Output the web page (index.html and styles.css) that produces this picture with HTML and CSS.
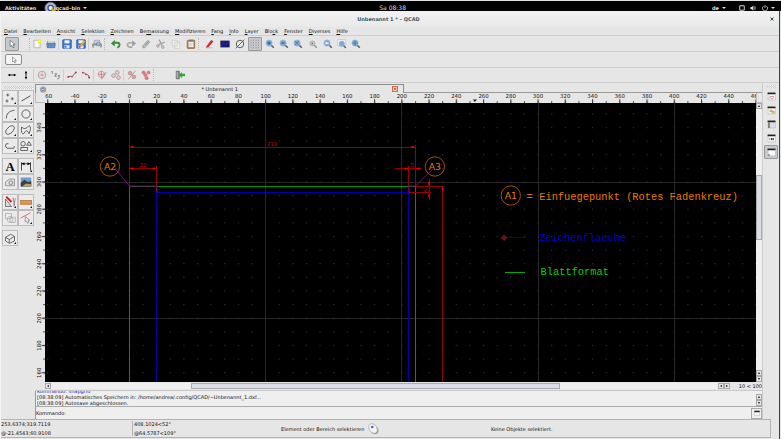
FILE: index.html
```html
<!DOCTYPE html>
<html lang="de">
<head>
<meta charset="utf-8">
<title>Unbenannt 1 * – QCAD</title>
<link rel="stylesheet" href="styles.css">
</head>
<body>
<svg class="defs" aria-hidden="true">
  <defs>
    <symbol id="cursor" viewBox="0 0 16 16"><path d="M5 2v10l2.500-2 2 4 2-1-2-4h3.500z" fill="#fff" stroke="#555"/></symbol>
    <symbol id="new" viewBox="0 0 16 16"><path d="M3 2h10v12H3z" fill="#f6f6f6" stroke="#999"/><circle cx="12" cy="4" r="3.500" fill="#f2e83a"/><circle cx="12" cy="4" r="1.500" fill="#fffbb0"/></symbol>
    <symbol id="open" viewBox="0 0 16 16"><path d="M2 3h5l1 1h6v9H2z" fill="#888"/><path d="M3 3h10v4H3z" fill="#d5d5d5"/><path d="M1 7h14l-1 7H2z" fill="#5d8fc7" stroke="#406fa5"/></symbol>
    <symbol id="save" viewBox="0 0 16 16"><rect x="1" y="1" width="14" height="14" rx="1" fill="#3b74d4" stroke="#2857a8"/><path d="M4 2h8v5H4z" fill="#f3f3f3"/><path d="M4 10h8v5H4z" fill="#dfe7f5"/><path d="M5 11h2v3H5z" fill="#2857a8"/></symbol>
    <symbol id="saveas" viewBox="0 0 16 16"><use href="#save"/><path d="M6 12l1-3 6-7 2 2-6 7z" fill="#f3b743" stroke="#a96b18" stroke-width=".7"/></symbol>
    <symbol id="print" viewBox="0 0 16 16"><path d="M4 2h8l1 6H3z" fill="#c9dcee" stroke="#888"/><path d="M1 8h14v5H1z" fill="#a9a9a9" stroke="#777"/><path d="M3 11h10v3H3z" fill="#ececec"/><circle cx="10" cy="8" r="3" fill="#9ec2e4" stroke="#668"/></symbol>
    <symbol id="undo" viewBox="0 0 16 16"><path d="M5 6h5c5 0 5 6 0 8" fill="none" stroke="#388c3a" stroke-width="3"/><path d="M0 7l6-6v11z" fill="#388c3a"/></symbol>
    <symbol id="redo" viewBox="0 0 16 16"><path d="M11 6H6c-5 0-5 6 0 7h4" fill="none" stroke="#aaa" stroke-width="2.500"/><path d="M16 7l-6-5v10z" fill="#999"/></symbol>
    <symbol id="eraser" viewBox="0 0 16 16"><path d="M3 11L11 2l3 3-8 9H3z" fill="#ccc" stroke="#777"/><path d="M6 11l6-7" stroke="#666"/></symbol>
    <symbol id="cut" viewBox="0 0 16 16"><path d="M5 1l5 10M14 5L4 9" stroke="#a4a4a4" stroke-width="2"/><circle cx="3" cy="11" r="2" fill="none" stroke="#999" stroke-width="1.500"/><circle cx="11" cy="13" r="2" fill="none" stroke="#999" stroke-width="1.500"/></symbol>
    <symbol id="copy" viewBox="0 0 16 16"><path d="M2 2h8v9H2zM6 5h8v10H6z" fill="#f0f0f0" stroke="#c2c2c2"/></symbol>
    <symbol id="paste" viewBox="0 0 16 16"><rect x="2" y="2" width="12" height="13" rx="1" fill="#b5813f" stroke="#80551d"/><path d="M4 4h8v9H4z" fill="#f4f4f4"/><path d="M5 1h6v3H5z" fill="#777"/><path d="M5 7h6M5 9h6M5 11h4" stroke="#aaa" stroke-width=".7"/></symbol>
    <symbol id="pen" viewBox="0 0 16 16"><path d="M3 11l7-9 3 2-8 9-3 1z" fill="#d92a28" stroke="#8e1313" stroke-width=".6"/><path d="M2 14h10" stroke="#e79b9b" stroke-width="1.500"/></symbol>
    <symbol id="draft" viewBox="0 0 16 16"><path d="M1 3h14v10H1z" fill="#0b1681" stroke="#444"/><path d="M2 11l5-4 2 2 5-4M3 6h3" stroke="#3a46a8" fill="none"/></symbol>
    <symbol id="noline" viewBox="0 0 16 16"><circle cx="8" cy="8" r="6" fill="none" stroke="#444" stroke-width="1.300"/><path d="M1 15L15 1" stroke="#4a4ab8" stroke-width="1.300"/></symbol>
    <symbol id="grid" viewBox="0 0 16 16"><path d="M1 2h14M1 6h14M1 10h14M1 14h14" stroke="#6b6b6b" stroke-width="1.300" stroke-dasharray="1.300 2.700"/></symbol>
    <symbol id="lens" viewBox="0 0 16 16"><path d="M9 9l5 5" stroke="#626262" stroke-width="2.500"/><circle cx="6.500" cy="6.500" r="5" fill="#78a9dc" stroke="#a4b6c9"/></symbol>
    <symbol id="zin" viewBox="0 0 16 16"><use href="#lens"/><path d="M4 6.500h5M6.500 4v5" stroke="#1d4f90" stroke-width="1.500"/></symbol>
    <symbol id="zout" viewBox="0 0 16 16"><use href="#lens"/><path d="M4 6.500h5" stroke="#1d4f90" stroke-width="1.500"/></symbol>
    <symbol id="zauto" viewBox="0 0 16 16"><use href="#lens"/><path d="M3 3l7 7M10 3l-7 7" stroke="#45719f"/></symbol>
    <symbol id="zsel" viewBox="0 0 16 16"><path d="M9 9l5 5" stroke="#888" stroke-width="2"/><circle cx="7" cy="7" r="4" fill="#cfcfcf" stroke="#999"/><path d="M5 7h4M7 5v4" stroke="#777"/></symbol>
    <symbol id="zprev" viewBox="0 0 16 16"><use href="#lens"/><path d="M3 6.500l3-2v1h3v2H6v1z" fill="#fff"/></symbol>
    <symbol id="zwin" viewBox="0 0 16 16"><path d="M1 1h13v10H1z" fill="#f4f4f4" stroke="#bbb"/><g transform="translate(2 2)"><use href="#lens" width="14" height="14"/></g></symbol>
    <symbol id="zpan" viewBox="0 0 16 16"><use href="#lens"/><path d="M6.500 2v9M2 6.500h9" stroke="#3b6ba3"/></symbol>

    <symbol id="horiz" viewBox="0 0 16 16"><path d="M3 8h10" stroke="#111" stroke-width="1.500"/><path d="M1 8l4-2v4zM15 8l-4-2v4z"/></symbol>
    <symbol id="vert" viewBox="0 0 16 16"><path d="M8 3v10" stroke="#111" stroke-width="1.500"/><path d="M8 1L6 5h4zM8 15l-2-4h4z"/></symbol>
    <symbol id="center" viewBox="0 0 16 16"><circle cx="8" cy="8" r="6" fill="none" stroke="#888"/><path d="M8 3v10M3 8h10" stroke="#e09999"/><circle cx="8" cy="8" r="2" fill="#e9a0a0"/></symbol>
    <symbol id="order" viewBox="0 0 16 16"><path d="M1 3l1-1v4M6 6h3l-3 4h3M11 9h3l-2 2q3 1 0 3h-2" fill="none" stroke="#444"/></symbol>
    <symbol id="pathup" viewBox="0 0 16 16"><path d="M2 11q3-2 6 0l5-6" fill="none" stroke="#444" stroke-width="1.200"/><circle cx="2" cy="11" r="1.500" fill="#c22"/><circle cx="14" cy="4" r="1.500" fill="#c22"/><path d="M7 11h3" stroke="#c22"/></symbol>
    <symbol id="pathdown" viewBox="0 0 16 16"><path d="M2 5q4-2 6 2 4-1 6 6" fill="none" stroke="#555" stroke-width="1.200"/><circle cx="3" cy="4" r="1.300" fill="#c22"/><circle cx="8" cy="7" r="1.300" fill="#c22"/><circle cx="13" cy="12" r="1.500" fill="#c22"/></symbol>
    <symbol id="tangent" viewBox="0 0 16 16"><circle cx="7" cy="7" r="5" fill="#f4dada" stroke="#999"/><path d="M7 1v12M1 7h12" stroke="#d55"/><path d="M7 15l8-12" stroke="#777"/></symbol>
    <symbol id="circles" viewBox="0 0 16 16"><g fill="#f0caca" stroke="#888"><circle cx="4" cy="9" r="3"/><circle cx="10" cy="4" r="3"/><circle cx="12" cy="12" r="3"/></g></symbol>
    <symbol id="slashred" viewBox="0 0 16 16"><g fill="#e99" stroke="#a88"><circle cx="5" cy="5" r="3"/><circle cx="11" cy="11" r="3"/></g><path d="M2 15L14 1" stroke="#777"/></symbol>
    <symbol id="redset" viewBox="0 0 16 16"><g fill="#e77" stroke="#b77"><circle cx="4" cy="4" r="2.500"/><circle cx="12" cy="4" r="2.500"/><circle cx="7" cy="8" r="2.500"/><circle cx="9" cy="13" r="2.500"/></g></symbol>
    <symbol id="exit" viewBox="0 0 16 16"><path d="M2 2h5v12H2z" fill="#ccc" stroke="#444"/><path d="M5 2v12" stroke="#333"/><path d="M6 8l5-5v3h5v4h-5v3z" fill="#31a831"/></symbol>

    <symbol id="point" viewBox="0 0 16 16"><path d="M5 2v4M3 4h4M4 10v4M2 12h4M11 7v4M9 9h4" stroke="#444"/></symbol>
    <symbol id="line" viewBox="0 0 16 16"><path d="M2 12l12-7" stroke="#444" stroke-width="1.200"/></symbol>
    <symbol id="arc" viewBox="0 0 16 16"><path d="M3 14Q3 4 14 3" fill="none" stroke="#555" stroke-width="1.200"/></symbol>
    <symbol id="circle" viewBox="0 0 16 16"><circle cx="8" cy="8" r="5.500" fill="none" stroke="#555" stroke-width="1.200"/></symbol>
    <symbol id="ellipse" viewBox="0 0 16 16"><ellipse cx="8" cy="8" rx="7" ry="4" transform="rotate(-45 8 8)" fill="none" stroke="#555" stroke-width="1.200"/></symbol>
    <symbol id="spline" viewBox="0 0 16 16"><path d="M2 4q5 5 10-2 4 2 0 11Q9 5 5 13 1 14 2 4z" fill="none" stroke="#555" stroke-width="1.200"/></symbol>
    <symbol id="poly" viewBox="0 0 16 16"><path d="M6 5H3q-3 3 1 6h9q2-2 0-3" fill="none" stroke="#555" stroke-width="1.200"/></symbol>
    <symbol id="shapes" viewBox="0 0 16 16"><g fill="none" stroke="#555" stroke-width="1.200"><circle cx="4" cy="5" r="3"/><path d="M12 2l3 5H9zM1 10h9v4H1z"/></g></symbol>
    <symbol id="letter" viewBox="0 0 16 16"><text x="8" y="14" class="glyph">A</text></symbol>
    <symbol id="dim" viewBox="0 0 16 16"><path d="M2 3v11M14 3v11M2 5h12" stroke="#333" fill="none" stroke-width="1.200"/><path d="M2 5l4-2v4zM14 5l-4-2v4z"/></symbol>
    <symbol id="hatch" viewBox="0 0 16 16"><path d="M2 13V8l5-4h7v9z" fill="#ddd" stroke="#888"/><circle cx="9" cy="9" r="2.500" fill="none" stroke="#777"/></symbol>
    <symbol id="image" viewBox="0 0 16 16"><path d="M1 2h14v12H1z" fill="#6f9fce"/><path d="M1 9l5-4 4 3 5-1v7H1z" fill="#3b3f3d"/><path d="M4 13l4-3 7 1v3H4z" fill="#b6a36a"/></symbol>
    <symbol id="modify" viewBox="0 0 16 16"><path d="M2 4v10h8z" fill="#ddd" stroke="#555"/><path d="M12 2l2 11M15 3l-2 11" stroke="#777"/><path d="M3 1l7 7" stroke="#d62020" stroke-width="2.500"/></symbol>
    <symbol id="measure" viewBox="0 0 16 16"><path d="M0 6h16v5H0z" fill="#dc954d" stroke="#b26e2d"/><path d="M3 6v2M6 6v2M9 6v2M12 6v2" stroke="#fff3"/></symbol>
    <symbol id="block" viewBox="0 0 16 16"><g fill="none" stroke="#aaa"><path d="M2 2h8v7H2z"/><circle cx="8" cy="10" r="4"/><path d="M8 7h7v7H8z"/></g></symbol>
    <symbol id="select" viewBox="0 0 16 16"><path d="M1 8l13-7" stroke="#e44"/><path d="M7 6v7l2-1 1 3 2-1-1-3h2z" fill="#eee" stroke="#888"/></symbol>
    <symbol id="solid" viewBox="0 0 16 16"><path d="M2 7l7-4 5 3v6l-7 3-5-3zM2 7l5 3 7-4M7 10v5" fill="none" stroke="#444"/></symbol>

    <symbol id="dock1" viewBox="0 0 16 16"><path d="M2 2h13v12H2z" fill="#f7f7f7" stroke="#bbb"/><path d="M1 1h14v3H1z" fill="#222"/><path d="M5 12V8h4M8 8h4l-2 4H7" stroke="#c66" fill="none"/></symbol>
    <symbol id="dock2" viewBox="0 0 16 16"><path d="M2 2h13v12H2z" fill="#f7f7f7" stroke="#bbb"/><path d="M1 1h14v3H1z" fill="#222"/><path d="M5 7h4v3H5zM9 9h4v4H9z" fill="#dbc667" stroke="#998743" stroke-width=".6"/></symbol>
    <symbol id="dock3" viewBox="0 0 16 16"><path d="M2 2h13v12H2z" fill="#ddd" stroke="#bbb"/><path d="M1 1h14v3H1z" fill="#222"/><path d="M2 4h3v10H2z" fill="#777"/></symbol>
    <symbol id="dock4" viewBox="0 0 16 16"><path d="M2 2h13v12H2z" fill="#f7f7f7" stroke="#bbb"/><path d="M1 1h14v3H1z" fill="#222"/><path d="M4 9h2M8 7v4M11 7v4M7 9h5" stroke="#333" stroke-width="1.500"/></symbol>
    <symbol id="dock5" viewBox="0 0 16 16"><path d="M2 2h13v12H2z" fill="#fafafa" stroke="#bbb"/><path d="M1 1h14v3H1z" fill="#222"/><path d="M2 11h3v3H2z" fill="#888"/></symbol>
    <symbol id="app" viewBox="0 0 16 16"><circle cx="7" cy="8" r="6.500" fill="#aeb7c4" stroke="#6d7890"/><circle cx="7" cy="8" r="3" fill="#e4ecf8" stroke="#33549a" stroke-width="1.500"/><path d="M8 9l6 5" stroke="#e0a21b" stroke-width="2.500"/></symbol>

    <pattern id="dots" x="-5" y="-5" width="100" height="100" patternUnits="userSpaceOnUse"><rect width="9" height="9" fill="#2e2e2e"/></pattern>
    <pattern id="ticksx" x="-4" y="0" width="100" height="74" patternUnits="userSpaceOnUse"><rect y="60" width="8" height="14" fill="#555"/></pattern>
    <pattern id="majorx" x="-4" y="0" width="200" height="74" patternUnits="userSpaceOnUse"><rect y="46" width="8" height="28" fill="#444"/></pattern>
    <pattern id="ticksy" x="0" y="-4" width="74" height="100" patternUnits="userSpaceOnUse"><rect x="60" width="14" height="8" fill="#555"/></pattern>
    <pattern id="majory" x="0" y="-4" width="74" height="200" patternUnits="userSpaceOnUse"><rect x="50" width="24" height="8" fill="#444"/></pattern>
  </defs>
</svg>

<header class="topbar">
  <button class="top-item">Aktivitäten</button>
  <button class="top-item app-menu"><svg class="app-icon"><use href="#app"/></svg>qcad–bin <span class="caret"></span></button>
  <span class="clock">Sa 08:38</span>
  <div class="tray">
    <button class="top-item">de <span class="caret"></span></button>
    <svg class="tray-icon" viewBox="0 0 16 16"><path d="M2 2h12v12H2z" fill="none" stroke="#ddd" stroke-width="2.500"/></svg>
    <svg class="tray-icon" viewBox="0 0 16 16"><path d="M1 5h4l4-4v14l-4-4H1z" fill="#ddd"/><path d="M11 4q3 4 0 8M13 2q4 6 0 12" stroke="#bbb" fill="none" stroke-width="1.500"/></svg>
    <svg class="tray-icon power" viewBox="0 0 16 16"><path d="M4 3a7 7 0 1 0 8 0M8 0v8" stroke="#ddd" fill="none" stroke-width="2"/></svg>
    <span class="caret"></span>
  </div>
</header>

<div class="window">
  <div class="titlebar"><h1>Unbenannt 1 * – QCAD</h1><button class="win-close" aria-label="Schließen"><svg viewBox="0 0 8 8"><path d="M1 1l6 6M7 1L1 7" stroke="#33464b" stroke-width="2"/></svg></button></div>

  <nav class="menubar">
    <button><u>D</u>atei</button><button><u>B</u>earbeiten</button><button><u>A</u>nsicht</button><button><u>S</u>elektion</button><button><u>Z</u>eichnen</button><button>Be<u>m</u>assung</button><button><u>M</u>odifizieren</button><button><u>F</u>ang</button><button><u>I</u>nfo</button><button><u>L</u>ayer</button><button>Blo<u>c</u>k</button><button><u>F</u>enster</button><button><u>D</u>iverses</button><button><u>H</u>ilfe</button>
  </nav>

  <div class="toolbar">
    <button class="tool pressed" aria-label="Auswahl"><svg><use href="#cursor"/></svg></button>
    <i class="handle wide"></i>
    <button class="tool" aria-label="Neu"><svg><use href="#new"/></svg></button>
    <button class="tool" aria-label="Öffnen"><svg><use href="#open"/></svg></button>
    <i class="sep"></i>
    <button class="tool" aria-label="Speichern"><svg><use href="#save"/></svg></button>
    <button class="tool" aria-label="Speichern unter"><svg><use href="#saveas"/></svg></button>
    <i class="sep"></i>
    <button class="tool" aria-label="Drucken"><svg><use href="#print"/></svg></button>
    <i class="handle"></i>
    <div class="group">
      <button class="tool" aria-label="Rückgängig"><svg><use href="#undo"/></svg></button>
      <button class="tool" aria-label="Wiederholen"><svg><use href="#redo"/></svg></button>
      <button class="tool" aria-label="Löschen"><svg><use href="#eraser"/></svg></button>
      <button class="tool" aria-label="Ausschneiden"><svg><use href="#cut"/></svg></button>
      <button class="tool" aria-label="Kopieren"><svg><use href="#copy"/></svg></button>
      <button class="tool" aria-label="Einfügen"><svg><use href="#paste"/></svg></button>
    </div>
    <i class="handle"></i>
    <div class="group">
      <button class="tool" aria-label="Stift"><svg><use href="#pen"/></svg></button>
      <button class="tool" aria-label="Entwurf"><svg><use href="#draft"/></svg></button>
      <button class="tool" aria-label="Linienstärke"><svg><use href="#noline"/></svg></button>
      <button class="tool pressed" aria-label="Raster"><svg><use href="#grid"/></svg></button>
      <button class="tool" aria-label="Vergrößern"><svg><use href="#zin"/></svg></button>
    </div>
    <button class="tool" aria-label="Verkleinern"><svg><use href="#zout"/></svg></button>
    <div class="group">
      <button class="tool" aria-label="Auto-Zoom"><svg><use href="#zauto"/></svg></button>
      <button class="tool" aria-label="Zoom auf Auswahl"><svg><use href="#zsel"/></svg></button>
      <button class="tool" aria-label="Vorherige Ansicht"><svg><use href="#zprev"/></svg></button>
    </div>
    <button class="tool" aria-label="Fenster-Zoom"><svg><use href="#zwin"/></svg></button>
    <button class="tool" aria-label="Verschieben"><svg><use href="#zpan"/></svg></button>
  </div>

  <div class="toolbar">
    <button class="tool outlined" aria-label="Zeiger"><svg><use href="#cursor"/></svg></button>
  </div>

  <div class="toolbar last">
    <button class="tool" aria-label="Horizontal"><svg><use href="#horiz"/></svg></button>
    <button class="tool" aria-label="Vertikal"><svg><use href="#vert"/></svg></button>
    <i class="sep"></i>
    <button class="tool" aria-label="Zentrum"><svg><use href="#center"/></svg></button>
    <button class="tool" aria-label="Reihenfolge"><svg><use href="#order"/></svg></button>
    <i class="sep"></i>
    <button class="tool" aria-label="Pfad"><svg><use href="#pathup"/></svg></button>
    <button class="tool" aria-label="Pfad umkehren"><svg><use href="#pathdown"/></svg></button>
    <i class="sep"></i>
    <button class="tool" aria-label="Tangente"><svg><use href="#tangent"/></svg></button>
    <button class="tool" aria-label="Kreise"><svg><use href="#circles"/></svg></button>
    <i class="sep"></i>
    <button class="tool" aria-label="Trennen"><svg><use href="#slashred"/></svg></button>
    <button class="tool" aria-label="Gruppe"><svg><use href="#redset"/></svg></button>
    <i class="handle far"></i>
    <button class="tool" aria-label="Beenden"><svg><use href="#exit"/></svg></button>
  </div>

  <div class="workspace">
    <aside class="palette">
      <i class="grip"></i>
      <div class="pad">
        <button class="more" aria-label="Punkt"><svg><use href="#point"/></svg></button>
        <button class="more" aria-label="Linie"><svg><use href="#line"/></svg></button>
        <button class="more" aria-label="Bogen"><svg><use href="#arc"/></svg></button>
        <button class="more" aria-label="Kreis"><svg><use href="#circle"/></svg></button>
        <button class="more" aria-label="Ellipse"><svg><use href="#ellipse"/></svg></button>
        <button class="more" aria-label="Spline"><svg><use href="#spline"/></svg></button>
        <button class="more" aria-label="Polylinie"><svg><use href="#poly"/></svg></button>
        <button class="more" aria-label="Formen"><svg><use href="#shapes"/></svg></button>
      </div>
      <div class="pad">
        <button aria-label="Text"><svg><use href="#letter"/></svg></button>
        <button class="more" aria-label="Bemassung"><svg><use href="#dim"/></svg></button>
        <button aria-label="Schraffur"><svg><use href="#hatch"/></svg></button>
        <button aria-label="Bild"><svg><use href="#image"/></svg></button>
      </div>
      <div class="pad">
        <button class="more" aria-label="Modifizieren"><svg><use href="#modify"/></svg></button>
        <button class="more" aria-label="Messen"><svg><use href="#measure"/></svg></button>
        <button aria-label="Block"><svg><use href="#block"/></svg></button>
        <button class="more" aria-label="Selektieren"><svg><use href="#select"/></svg></button>
      </div>
      <div class="pad">
        <button class="more" aria-label="Projektion"><svg><use href="#solid"/></svg></button>
      </div>
    </aside>

    <main class="center">
      <div class="tabs">
        <div class="tab"><svg class="tab-icon"><use href="#app"/></svg><span>* Unbenannt 1</span><button class="tab-close" aria-label="Tab schließen"><svg viewBox="0 0 8 8"><path d="M2 2h4v4H2z" fill="none" stroke="#fff"/></svg></button></div>
        <div class="tab-rest"></div>
      </div>
      <div class="viewport">
        <div class="corner"></div>
        <svg class="ruler-x" viewBox="-620 0 5220 74" preserveAspectRatio="xMinYMax slice">
          <rect x="-620" width="5220" height="74" fill="url(#ticksx)"/>
          <rect x="-620" width="5220" height="74" fill="url(#majorx)"/>
          <g class="scale">
            <text x="-600" y="40">-60</text><text x="-400" y="40">-40</text><text x="-200" y="40">-20</text><text x="0" y="40">0</text><text x="200" y="40">20</text><text x="400" y="40">40</text><text x="600" y="40">60</text><text x="800" y="40">80</text><text x="1000" y="40">100</text><text x="1200" y="40">120</text><text x="1400" y="40">140</text><text x="1600" y="40">160</text><text x="1800" y="40">180</text><text x="2000" y="40">200</text><text x="2200" y="40">220</text><text x="2400" y="40">240</text><text x="2600" y="40">260</text><text x="2800" y="40">280</text><text x="3000" y="40">300</text><text x="3200" y="40">320</text><text x="3400" y="40">340</text><text x="3600" y="40">360</text><text x="3800" y="40">380</text><text x="4000" y="40">400</text><text x="4200" y="40">420</text><text x="4400" y="40">440</text><text x="4600" y="40">460</text>
          </g>
          <path d="M2521 48h30l-15 18z" fill="#222"/>
        </svg>
        <div class="corner"></div>
        <svg class="ruler-y" viewBox="0 -3580 74 2048" preserveAspectRatio="xMaxYMin slice">
          <rect y="-3580" width="74" height="2048" fill="url(#ticksy)"/>
          <rect y="-3580" width="74" height="2048" fill="url(#majory)"/>
          <g class="scale">
            <text transform="translate(42 -3400) rotate(-90)">340</text><text transform="translate(42 -3200) rotate(-90)">320</text><text transform="translate(42 -3000) rotate(-90)">300</text><text transform="translate(42 -2800) rotate(-90)">280</text><text transform="translate(42 -2600) rotate(-90)">260</text><text transform="translate(42 -2400) rotate(-90)">240</text><text transform="translate(42 -2200) rotate(-90)">220</text><text transform="translate(42 -2000) rotate(-90)">200</text><text transform="translate(42 -1800) rotate(-90)">180</text><text transform="translate(42 -1600) rotate(-90)">160</text>
          </g>
        </svg>

        <!-- Drawing units: 0.1 mm, y axis negated -->
        <svg class="canvas" viewBox="-620 -3580 5220 2048" preserveAspectRatio="xMinYMin slice">
          <rect x="-620" y="-3580" width="5220" height="3000" fill="url(#dots)"/>
          <path class="ln grid-line" d="M0-3580V0M1000-3580V0M2000-3580V0M3000-3580V0M4000-3580V0M-620-3000H4600M-620-2000H4600"/>
          <path class="ln green" d="M0-2970H2100V0M0-2970V0"/>
          <path class="ln blue" d="M200 0V-2922H2050V0"/>
          <path class="ln red" d="M0-3270V-2970M2100-3270V-2970M0-3257H2100M0-3099H200M200-3115V-2930M1950-3099H2150M2050-3115V-2970M2100-2970H2310M2050-2922H2210M2199-3020V-2870M2300-2970V0"/>
          <path class="arrow" d="M0-3257l30-9v18zM2100-3257l-30-9v18zM0-3099l30-9v18zM200-3099l-30-9v18zM2050-3099l-30-9v18zM2100-3099l30-9v18zM2199-2970l-9-30h18zM2199-2922l-9 30h18zM2300-2970l-9 30h18z"/>
          <path class="ln purple" d="M-94-3085L0-2970H200V-2922M2225-3095L2100-2970H2050V-2922"/>
          <g class="dimtext"><text x="1046" y="-3266">210</text><text x="100" y="-3108">20</text><text x="2075" y="-3108">5</text><text transform="translate(2188 -2940) rotate(-90)">5</text></g>
          <g class="ring"><circle cx="-143" cy="-3114" r="71"/><circle cx="2242" cy="-3114" r="71"/><circle cx="2799" cy="-2901" r="71"/></g>
          <g class="mark"><text x="-143" y="-3088">A2</text><text x="2242" y="-3088">A3</text><text x="2799" y="-2875">A1</text></g>
          <g class="note">
            <text class="orange" x="2915" y="-2868">=</text>
            <text class="orange" x="3008" y="-2868">Einfuegepunkt (Rotes Fadenkreuz)</text>
            <text class="blue-text" x="3008" y="-2567">Zeichenflaeche</text>
            <text class="green-text" x="3018" y="-2317">Blattformat</text>
          </g>
          <path class="ln blue" d="M2750-2591H2904"/>
          <path d="M2726-2591l24-24 24 24-24 24z" fill="#6d1018"/>
          <path class="ln lime" d="M2753-2337H2904"/>
        </svg>

        <div class="vscroll">
          <button class="up" aria-label="Nach oben"></button>
          <div class="track"><i class="before"></i><i class="thumb"></i><i class="after"></i></div>
          <button class="up" aria-label="Nach oben"></button>
          <button class="down" aria-label="Nach unten"></button>
        </div>
      </div>
      <div class="hrow">
        <div class="hscroll">
          <button class="left" aria-label="Nach links"></button>
          <div class="track"><i class="before"></i><i class="thumb"></i><i class="after"></i></div>
          <button class="left" aria-label="Nach links"></button>
          <button class="right" aria-label="Nach rechts"></button>
        </div>
        <span class="gridinfo">10 &lt; 100</span>
      </div>
      <i class="splitter"></i>
      <div class="log">
        <div class="lines">
          <p class="cmd">Kommando: snapgrid</p>
          <p>[08:38:09] Automatisches Speichern in: /home/andrea/.config/QCAD/~Unbenannt_1.dxf...</p>
          <p>[08:38:09] Autosave abgeschlossen.</p>
        </div>
        <div class="logscroll"><button class="up" aria-label="Nach oben"></button><button class="down" aria-label="Nach unten"></button></div>
      </div>
      <div class="command">
        <label for="command">Kommando:</label>
        <input id="command" type="text">
        <button aria-label="Befehlszeile"><svg viewBox="0 0 16 16"><path d="M1 2h14v12H1z" fill="#fff" stroke="#999"/><path d="M1 2h14v4H1z" fill="#222"/></svg></button>
      </div>
    </main>

    <aside class="dock">
      <i class="grip"></i>
      <button class="tool" aria-label="Blockliste"><svg><use href="#dock1"/></svg></button>
      <button class="tool" aria-label="Layerliste"><svg><use href="#dock2"/></svg></button>
      <button class="tool" aria-label="Eigenschaften"><svg><use href="#dock3"/></svg></button>
      <button class="tool" aria-label="Bibliothek"><svg><use href="#dock4"/></svg></button>
      <button class="tool pressed" aria-label="Befehlszeile anzeigen"><svg><use href="#dock5"/></svg></button>
    </aside>
  </div>

  <footer class="status">
    <div class="coords"><span>253.6374;319.7119</span><span>@-21.4543;60.9108</span></div>
    <div class="coords polar"><span>408.1024&lt;52°</span><span>@64.5787&lt;109°</span></div>
    <div class="hint"><span>Element oder Bereich selektieren</span><svg class="mouse" viewBox="0 0 16 16"><ellipse cx="10" cy="10" rx="5" ry="6" transform="rotate(-40 10 10)" fill="#999"/><ellipse cx="8" cy="8" rx="5" ry="7" transform="rotate(-35 8 8)" fill="#f5f5f5" stroke="#aaa"/><circle cx="7" cy="6" r="1.800" fill="#4565d2"/></svg></div>
    <div class="selection">Keine Objekte selektiert.</div>
  </footer>
</div>
</body>
</html>
```
FILE: styles.css
```css
* { box-sizing: border-box; }

body {
  margin: 0;
  height: 100vh;
  display: flex;
  flex-direction: column;
  overflow: hidden;
  background: #dfe3e3;
  color: #111;
  font: 5px/6px "DejaVu Sans", sans-serif;
}

button, input {
  margin: 0;
  padding: 0;
  border: 0;
  background: none;
  color: inherit;
  font: inherit;
}

button { display: flex; align-items: center; justify-content: center; }
svg { display: block; }
.defs { position: absolute; width: 0; height: 0; }
.glyph { font: bold 17px "Liberation Serif", serif; text-anchor: middle; }

/* Desktop bar */
.topbar {
  display: grid;
  grid-template-columns: auto auto 1fr auto;
  align-items: center;
  height: 10px;
  margin-top: 1px;
  padding: 0 6px 0 5px;
  flex: none;
  background: #000;
  color: #ddd;
  overflow: hidden;
}
.topbar .top-item { white-space: nowrap; font-weight: bold; }
.app-menu { margin-left: 8px; }
.app-icon { width: 15px; height: 14px; margin-right: -4px; }
.clock { grid-column: 3; justify-self: center; padding-right: 14px; font-size: 6px; }
.caret { margin-left: 3px; border: 2px solid transparent; border-top: 2px solid #ddd; border-bottom: 0; }
.tray { display: flex; align-items: center; }
.tray-icon { width: 6px; height: 6px; margin-left: 5px; }
.tray .top-item { margin-right: 8px; }
.tray .power { margin-left: 6px; }

/* Window */
.window {
  flex: 1;
  min-height: 0;
  display: flex;
  flex-direction: column;
  margin-right: 1px;
  padding-bottom: 1px;
  border-right: 1px solid #16545c;
  border-left: 1px solid #f4f4f4;
  background: #e6e6e6;
}
.titlebar {
  display: flex;
  align-items: center;
  height: 16px;
  flex: none;
  padding-right: 5px;
  background: linear-gradient(#f2f2f2, #e9e9e9);
}
.titlebar h1 { flex: 1; margin: 0; padding-left: 6px; text-align: center; font-size: 5px; font-weight: bold; color: #3d585e; }
.win-close svg { width: 4px; height: 4px; }

.menubar {
  display: flex;
  height: 9px;
  flex: none;
  border-bottom: 1px solid #cfcfcf;
}
.menubar button { padding: 0 3px; white-space: pre; display: block; }

.toolbar {
  display: flex;
  align-items: center;
  height: 16px;
  flex: none;
  padding-left: 4px;
  border-bottom: 1px solid #cdcdcd;
}
.toolbar.last { height: 15px; }
.group { display: flex; gap: 1px; }
.tool { width: 14px; height: 14px; flex: none; border-radius: 1px; }
.tool svg { width: 10px; height: 10px; }
.pressed { background: #c6c9ce; border: 1px solid #9a9a9a; }
.outlined { width: 17px; height: 11px; background: #f4f4f4; border: 1px solid #8c8c8c; border-radius: 2px; }
.outlined svg { width: 8px; height: 8px; }
.sep { width: 2px; height: 12px; border-left: 1px solid #cfcfcf; }
.handle { width: 5px; height: 12px; border-left: 1px dotted #bbb; }
.handle.wide { width: 11px; border-left: 0; border-right: 1px dotted #bbb; }
.handle.far { width: 20px; }

.workspace {
  flex: 1;
  min-height: 0;
  display: grid;
  grid-template-columns: 34px minmax(0, 1fr) 17px;
}

/* Tool palette */
.palette { padding: 3px 0 0 1px; }
.grip { display: block; height: 3px; margin: 0 2px 1px; background: repeating-conic-gradient(#ccc 0 25%, #eee 0 50%) 0 0 / 2px 2px; }
.pad { display: grid; grid-template-columns: 16px 16px; margin-bottom: 4px; }
.pad button {
  height: 16px;
  position: relative;
  background: #ebebeb;
  border: 1px solid #b0b0b0;
  border-top-color: #fafafa;
  border-left-color: #fafafa;
  outline: 1px solid #bdbdbd;
  outline-offset: -1px;
}
.pad svg { width: 12px; height: 12px; }
.more::after { content: ""; position: absolute; right: 1px; bottom: 1px; border: 1px solid #111; border-top-color: transparent; border-left-color: transparent; }

/* Document area */
.center { display: flex; flex-direction: column; min-height: 0; }
.tabs { display: flex; height: 10px; flex: none; padding-top: 1px; }
.tab {
  flex: 1;
  display: flex;
  align-items: center;
  justify-content: space-between;
  padding: 0 4px;
  border: 1px solid #8f8f8f;
  border-bottom: 0;
}
.tab-rest { flex: 1; border-bottom: 1px solid #999; }
.tab-icon { width: 7px; height: 7px; }
.tab-close { width: 6px; height: 6px; background: #e4663f; }
.tab-close svg { width: 6px; height: 6px; }

.viewport {
  flex: 1;
  min-height: 0;
  display: grid;
  grid-template: 10px minmax(0, 1fr) / 10px minmax(0, 1fr) 6px;
}
.ruler-x, .ruler-y, .canvas { width: 100%; height: 100%; min-width: 0; min-height: 0; }
.scale { font: 40px "DejaVu Sans", sans-serif; text-anchor: middle; fill: #111; }
.canvas { background: #000; }
.corner { border: 1px solid #bbb; border-width: 0 0 1px 1px; }

.ln { fill: none; stroke-width: 1px; vector-effect: non-scaling-stroke; shape-rendering: crispEdges; }
.grid-line { stroke: #262626; }
.green { stroke: #009600; }
.lime { stroke: #00a800; }
.blue { stroke: #0000a8; }
.red { stroke: #960000; }
.purple { stroke: #7d0080; shape-rendering: auto; }
.arrow { fill: #f00000; }
.dimtext { font: 40px "DejaVu Sans", sans-serif; text-anchor: middle; fill: #d00000; }
.ring { fill: none; stroke: #a85500; stroke-width: 7px; }
.mark { font: 68px "DejaVu Sans", sans-serif; text-anchor: middle; fill: #e67a00; }
.note { font: 76px "Liberation Mono", monospace; }
.orange { fill: #e67a00; }
.blue-text { fill: #0000d2; }
.green-text { fill: #00d200; }

/* Scroll bars */
.vscroll { display: flex; flex-direction: column; background: #efefef; }
.vscroll .track { flex: 1; display: flex; flex-direction: column; }
.vscroll .before { flex: 66; }
.vscroll .thumb { flex: 64; }
.vscroll .after { flex: 131; }
.thumb { background: #dcdce4; border: 1px solid #a9abb3; }
.up, .down, .left, .right { width: 6px; height: 6px; flex: none; background: #e3e3e8; border: 1px solid #aaa; }
.up::after, .down::after, .left::after, .right::after { content: ""; border: 1px solid transparent; }
.up::after { border-bottom: 2px solid #111; border-top: 0; }
.down::after { border-top: 2px solid #111; border-bottom: 0; }
.left::after { border-right: 2px solid #111; border-left: 0; }
.right::after { border-left: 2px solid #111; border-right: 0; }

.hrow { display: flex; align-items: center; height: 7px; flex: none; padding-left: 10px; }
.hscroll { flex: 1; display: flex; background: #efefef; }
.hscroll .track { flex: 1; display: flex; }
.hscroll .before { flex: 140; }
.hscroll .thumb { flex: 368; }
.hscroll .after { flex: 158; }
.gridinfo { width: 32px; text-align: right; white-space: nowrap; }
.splitter { height: 2px; flex: none; border-bottom: 1px solid #c8c8c8; }

.log { display: flex; height: 16px; flex: none; border-left: 1px solid #999; border-bottom: 1px solid #aaa; background: #efefef; }
.lines { flex: 1; min-width: 0; display: flex; flex-direction: column; justify-content: flex-end; overflow: hidden; padding: 0 1px; }
.lines p { margin: 0; flex: none; white-space: nowrap; }
.lines .cmd { color: #2222cc; }
.logscroll { display: flex; flex-direction: column; justify-content: flex-end; }

.command { display: flex; align-items: center; height: 12px; flex: none; background: #efefef; border-left: 1px solid #999; }
.command input { flex: 1; min-width: 0; height: 10px; outline: 0; }
.command button { width: 11px; height: 11px; border: 1px solid #aaa; }
.command svg { width: 6px; height: 6px; }

.dock { display: flex; flex-direction: column; align-items: center; padding-top: 2px; border-left: 1px solid #ccc; }
.dock .grip { width: 10px; }
.dock svg { width: 9px; height: 9px; }

/* Status bar */
.status {
  display: grid;
  grid-template-columns: 131px 149px 210px 1fr;
  align-items: center;
  height: 19px;
  flex: none;
  margin-right: 8px;
  border: 1px solid #b3b3b3;
  border-width: 1px 1px 1px 0;
}
.coords { display: flex; flex-direction: column; gap: 3px; }
.polar { padding-left: 1px; border-left: 1px solid #b3b3b3; }
.hint { display: flex; align-items: center; gap: 3px; }
.mouse { width: 12px; height: 13px; }
```
